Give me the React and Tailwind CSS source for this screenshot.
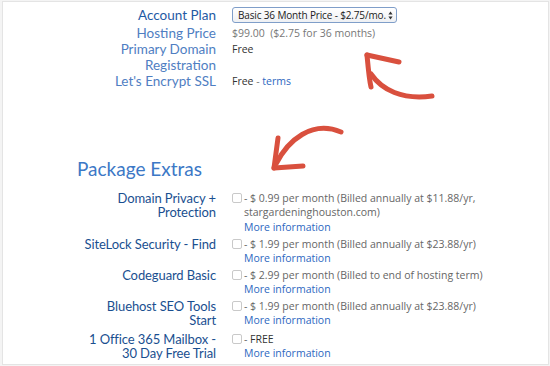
import React from "react";

function Check() {
  return <span className="inline-block w-[10px] h-[10px] border border-[#c9c9c9] rounded-[2px] bg-white shrink-0 mt-[2px]" />;
}

function More() {
  return <div className="text-[#2d68bf]">More information</div>;
}

function Extra({ label, children, className = "" }) {
  return (
    <div className={"flex " + className}>
      <div className="w-[213px] shrink-0 text-right text-[13px] text-[#1a4f90] font-['Lato',sans-serif] leading-[14.5px] tracking-[-0.1px]">
        {label}
      </div>
      <div className="ml-[16px] flex text-[10.5px] leading-[14.5px] text-[#666] font-['Open_Sans',sans-serif]">
        <Check />
        <div className="ml-[2px]">{children}</div>
      </div>
    </div>
  );
}

export default function App() {
  return (
    <div className="relative w-[550px] h-[366px] bg-[#f4f4f4] overflow-hidden">
      <div className="ml-[2px] mt-[1px] w-[547px] h-[364px] border border-[#e4e4e4] bg-white">
        {/* Account section */}
        <div className="pt-[5px]">
          <div className="flex items-center h-[16px]">
            <div className="w-[213px] shrink-0 text-right text-[13.5px] text-[#1f5aa4] font-['Lato',sans-serif] leading-[16px]">
              Account Plan
            </div>
            <div className="ml-[16px] w-[165px] h-[16px] flex items-center justify-between whitespace-nowrap border border-[#7f9ec9] rounded-[3px] bg-gradient-to-b from-white to-[#eef0f3] pl-[5px] pr-[3px] text-[10px] tracking-[-0.15px] text-[#222] font-['Open_Sans',sans-serif] leading-none">
              <span>Basic 36 Month Price - $2.75/mo.</span>
              <svg width="5" height="9" viewBox="0 0 5 9" className="shrink-0">
                <path d="M2.5 0.5 L4.6 3.6 L0.4 3.6 Z" fill="#333" />
                <path d="M2.5 8.5 L4.6 5.4 L0.4 5.4 Z" fill="#333" />
              </svg>
            </div>
          </div>
          <div className="flex mt-[1.5px] leading-[17px]">
            <div className="w-[213px] shrink-0 text-right text-[13.5px] text-[#4f7ec2] font-['Lato',sans-serif]">
              Hosting Price
            </div>
            <div className="ml-[16px] text-[10.5px] text-[#777] font-['Open_Sans',sans-serif]">
              $99.00&nbsp; ($2.75 for 36 months)
            </div>
          </div>
          <div className="flex leading-[15.5px] mt-[0.5px]">
            <div className="w-[213px] shrink-0 text-right text-[13.5px] text-[#4f7ec2] font-['Lato',sans-serif]">
              Primary Domain
              <br />
              Registration
            </div>
            <div className="ml-[16px] text-[10.5px] text-[#333] font-['Open_Sans',sans-serif]">Free</div>
          </div>
          <div className="flex leading-[16px]">
            <div className="w-[213px] shrink-0 text-right text-[13.5px] text-[#4f7ec2] font-['Lato',sans-serif]">
              Let's Encrypt SSL
            </div>
            <div className="ml-[16px] text-[10.5px] text-[#333] font-['Open_Sans',sans-serif]">
              Free <span className="text-[#777]">-</span> <span className="text-[#2d68bf]">terms</span>
            </div>
          </div>
        </div>

        {/* Package extras */}
        <div className="mt-[68px] pl-[74px] text-[19px] leading-[24px] text-[#3c78c6] font-['Lato',sans-serif]">
          Package Extras
        </div>

        <div className="mt-[9.5px]">
          <Extra label={<>Domain Privacy +<br />Protection</>}>
            - $ 0.99 per month (Billed annually at $11.88/yr,
            <br />
            stargardeninghouston.com)
            <More />
          </Extra>
          <Extra label="SiteLock Security - Find" className="mt-[2.5px]">
            - $ 1.99 per month (Billed annually at $23.88/yr)
            <More />
          </Extra>
          <Extra label="Codeguard Basic" className="mt-[2px]">
            - $ 2.99 per month (Billed to end of hosting term)
            <More />
          </Extra>
          <Extra label={<>Bluehost SEO Tools<br />Start</>} className="mt-[2px]">
            - $ 1.99 per month (Billed annually at $23.88/yr)
            <More />
          </Extra>
          <Extra label={<>1 Office 365 Mailbox -<br />30 Day Free Trial</>} className="mt-[4px]">
            - <span className="text-[#333]">FREE</span>
            <More />
          </Extra>
        </div>
      </div>

      {/* hand-drawn arrows overlay */}
      <svg className="absolute left-0 top-0 pointer-events-none" width="550" height="366" viewBox="0 0 550 366">
        <g fill="none" stroke="#d9503e" strokeWidth="5" strokeLinecap="round" strokeLinejoin="round">
          <path d="M367 55 L399 62" />
          <path d="M367 55 C368 66, 369 78, 371 87" />
          <path d="M371 74 C382 90, 402 100, 432 96" />
          <path d="M274 168 L278 138" />
          <path d="M274 168 L303 166" />
          <path d="M276 164 C288 140, 312 120, 341 132" />
        </g>
      </svg>
    </div>
  );
}
